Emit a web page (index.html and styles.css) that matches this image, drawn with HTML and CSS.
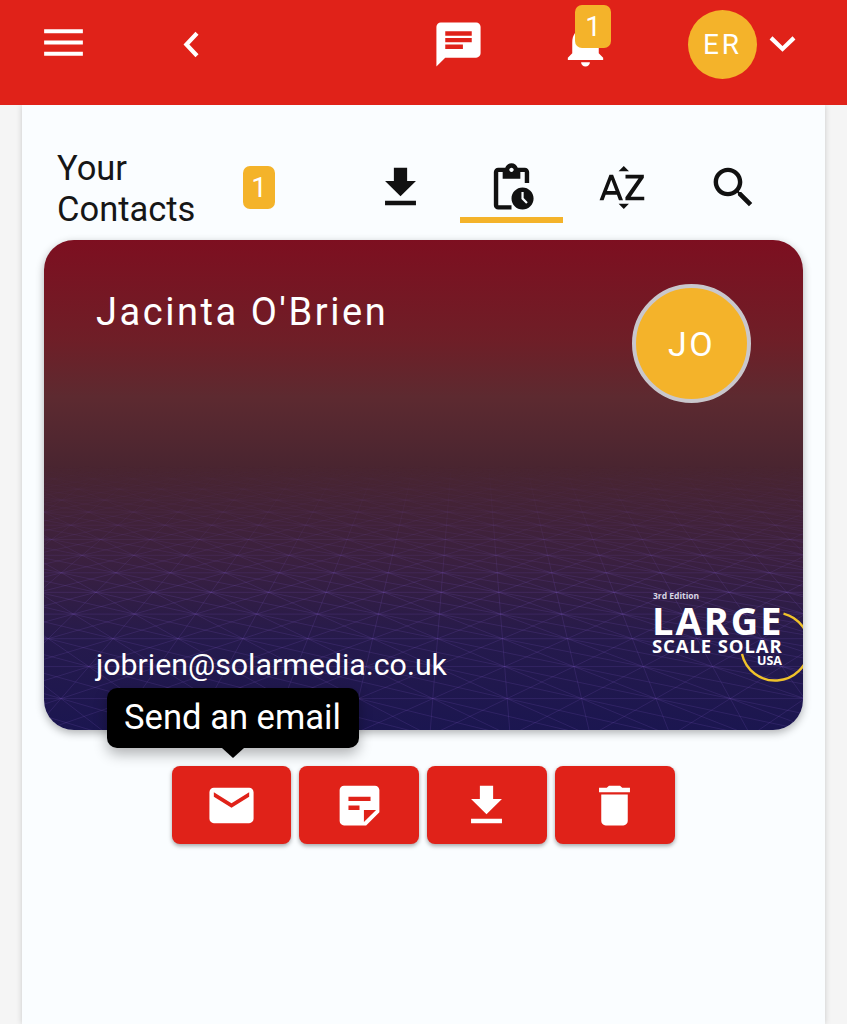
FILE: index.html
```html
<!DOCTYPE html>
<html lang="en">

<head>
    <meta charset="UTF-8">
    <meta name="viewport" content="width=device-width, initial-scale=1.0">
    <title>Your Contacts</title>
    <link rel="stylesheet" href="styles.css">
</head>

<body>
    <header class="topbar">
        <svg class="icon menu-icon" viewBox="0 0 52 52"><path d="M7 11h38v4H7zM7 22h38v4H7zM7 33h38v4H7z" /></svg>
        <svg class="icon back-icon" viewBox="0 0 24 24"><path d="M15.4 6.9 10.6 12l4.8 5.1" fill="none" stroke="#fff" stroke-width="1.9" /></svg>
        <svg class="icon chat-icon" viewBox="0 0 24 24"><path d="M20 2H4c-1.1 0-2 .9-2 2v18l4-4h14c1.1 0 2-.9 2-2V4c0-1.1-.9-2-2-2zM6 9h12v2H6V9zm8 5H6v-2h8v2zm4-6H6V6h12v2z" /></svg>
        <div class="bell">
            <svg class="icon" viewBox="0 0 24 24"><path d="M12 22c1.1 0 2-.9 2-2h-4c0 1.1.9 2 2 2zm6-6v-5c0-3.07-1.63-5.64-4.5-6.32V4c0-.83-.67-1.5-1.5-1.5s-1.5.67-1.5 1.5v.68C7.64 5.36 6 7.92 6 11v5l-2 2v1h16v-1l-2-2z" /></svg>
            <span class="badge bell-badge">1</span>
        </div>
        <div class="avatar">ER</div>
        <svg class="icon caret-icon" viewBox="0 0 24 24"><path d="M6.8 9 12 14l5.2-5" fill="none" stroke="#fff" stroke-width="1.9" /></svg>
    </header>

    <main class="panel">
        <div class="title-row">
            <h2 class="title">Your Contacts</h2>
            <span class="badge title-badge">1</span>
            <div class="tabs">
                <div class="tab">
                    <svg class="icon dark" viewBox="0 0 24 24"><path d="M19 9h-4V3H9v6H5l7 7 7-7zM5 18v2h14v-2H5z" /></svg>
                </div>
                <div class="tab tab-on">
                    <svg class="icon dark" viewBox="0 0 24 24"><path d="M17 12c-2.76 0-5 2.24-5 5s2.24 5 5 5 5-2.24 5-5-2.24-5-5-5zm1.65 7.35L16.5 17.2V14h1v2.79l1.85 1.85-.7.71zM18 3h-3.18C14.4 1.84 13.3 1 12 1s-2.4.84-2.82 2H6c-1.1 0-2 .9-2 2v15c0 1.1.9 2 2 2h6v-2H6V5h2v3h8V5h2v5h2V5c0-1.1-.9-2-2-2zm-6 2c-.55 0-1-.45-1-1s.45-1 1-1 1 .45 1 1-.45 1-1 1z" /></svg>
                </div>
                <div class="tab">
                    <svg class="icon dark" viewBox="0 0 24 24"><path d="M14.94 4.66h-4.72l2.36-2.36zm-4.69 14.71h4.66l-2.33 2.33zM6.1 6.27L1.6 17.73h1.84l.92-2.45h5.11l.92 2.45h1.84L7.74 6.27H6.1zm-1.13 7.37l1.94-5.18 1.94 5.18H4.97zm10.76 2.5h6.12v1.59h-8.53v-1.29l5.92-8.56h-5.88v-1.6h8.3v1.26l-5.93 8.6z" /></svg>
                </div>
                <div class="tab">
                    <svg class="icon dark" viewBox="0 0 24 24"><path d="M15.5 14h-.79l-.28-.27C15.41 12.59 16 11.11 16 9.5 16 5.91 13.09 3 9.5 3S3 5.91 3 9.5 5.91 16 9.5 16c1.61 0 3.09-.59 4.23-1.57l.27.28v.79l5 4.99L20.49 19l-4.99-5zm-6 0C7.01 14 5 11.99 5 9.5S7.01 5 9.5 5 14 7.01 14 9.5 11.99 14 9.5 14z" /></svg>
                </div>
            </div>
        </div>

        <section class="card">
            <svg id="cardGrid" class="card-grid" viewBox="0 0 759 490"></svg>
            <div class="card-top">
                <div class="card-name">Jacinta O'Brien</div>
                <div class="card-avatar">JO</div>
            </div>
            <div class="card-email">jobrien@solarmedia.co.uk</div>
            <div class="logo">
                <svg class="logo-arc" viewBox="0 0 151 100"><path d="M131.5 21.6A34 34 0 1 1 90 62" /></svg>
                <div class="logo-edition">3rd Edition</div>
                <div class="logo-large">LARGE</div>
                <div class="logo-scale">SCALE SOLAR</div>
                <div class="logo-usa">USA</div>
            </div>
        </section>

        <div class="actions">
            <button class="action">
                <svg class="icon" viewBox="0 0 24 24"><path d="M20 4H4c-1.1 0-1.99.9-1.99 2L2 18c0 1.1.9 2 2 2h16c1.1 0 2-.9 2-2V6c0-1.1-.9-2-2-2zm0 4l-8 5-8-5V6l8 5 8-5v2z" /></svg>
                <span class="tooltip">Send an email</span>
            </button>
            <button class="action">
                <svg class="icon" viewBox="0 0 24 24"><path d="M19 3H4.99C3.89 3 3 3.9 3 5l.01 14c0 1.1.89 2 1.99 2h10l6-6V5c0-1.1-.9-2-2-2zM7 8h10v2H7V8zm5 6H7v-2h5v2zm2 5.5V14h5.5L14 19.5z" /></svg>
            </button>
            <button class="action">
                <svg class="icon" viewBox="0 0 24 24"><path d="M19 9h-4V3H9v6H5l7 7 7-7zM5 18v2h14v-2H5z" /></svg>
            </button>
            <button class="action">
                <svg class="icon" viewBox="0 0 24 24"><path d="M6 19c0 1.1.9 2 2 2h8c1.1 0 2-.9 2-2V7H6v12zM19 4h-3.5l-1-1h-5l-1 1H5v2h14V4z" /></svg>
            </button>
        </div>
    </main>

    <script src="grid.js"></script>
</body>

</html>
```
FILE: styles.css
```css
* {
    box-sizing: border-box;
}

body {
    margin: 0;
    background-color: #f5f5f5;
    font-family: Roboto, "Liberation Sans", sans-serif;
}

.icon {
    display: block;
    flex: none;
    width: 53px;
    height: 53px;
    fill: #ffffff;
}

.icon.dark {
    fill: #111111;
}

/* top bar */
.topbar {
    display: flex;
    align-items: center;
    height: 105px;
    padding: 0 0 16px 37px;
    background-color: #e02219;
    position: relative;
    z-index: 2;
}

.back-icon {
    margin-left: 73px;
}

.chat-icon {
    margin-left: 216px;
}

.caret-icon {
    margin-left: -1px;
}

.bell {
    position: relative;
    margin-left: 74px;
}

.badge {
    display: flex;
    align-items: center;
    justify-content: center;
    background-color: #f4b32a;
    border-radius: 7px;
    color: #ffffff;
    font-size: 28px;
}

.bell-badge {
    position: absolute;
    top: -13px;
    left: 16px;
    width: 36px;
    height: 43px;
}

.avatar {
    display: flex;
    align-items: center;
    justify-content: center;
    flex: none;
    width: 69px;
    height: 69px;
    margin-left: 76px;
    border-radius: 50%;
    background-color: #f4b32a;
    color: #ffffff;
    font-size: 28px;
    letter-spacing: 3px;
}

/* white panel */
.panel {
    width: 803px;
    min-height: calc(100vh - 105px);
    margin-left: 22px;
    padding: 42px 22px 0;
    background-color: #fafdff;
    box-shadow: 0 0 6px rgba(0, 0, 0, 0.18);
}

.title-row {
    display: flex;
    align-items: flex-start;
    height: 82px;
    padding-left: 13px;
}

.title {
    width: 186px;
    margin: 1px 0 0;
    color: #161616;
    font-size: 34.5px;
    font-weight: 400;
    line-height: 41px;
}

.title-badge {
    width: 32px;
    height: 43px;
    margin-top: 19px;
    flex: none;
}

.tabs {
    display: flex;
    margin-left: 70px;
    margin-top: 14px;
}

.tab {
    display: flex;
    justify-content: center;
    width: 103px;
    height: 62px;
    margin: 0 4px;
}

.tab-on {
    border-bottom: 6px solid #f4b32a;
}

/* contact card */
.card {
    position: relative;
    display: flex;
    flex-direction: column;
    justify-content: space-between;
    height: 490px;
    margin-top: 11px;
    padding: 44px 52px 48px;
    overflow: hidden;
    border-radius: 30px;
    color: #ffffff;
    background: linear-gradient(180deg, #7d0f20 0%, #6f1e27 20%, #5d2a30 32%, #4a2530 46%, #3a2040 66%, #251a4c 82%, #1b1650 100%);
    box-shadow: 0 3px 8px rgba(0, 0, 0, 0.3);
}

.card-grid {
    position: absolute;
    top: 0;
    left: 0;
    width: 759px;
    height: 490px;
    filter: blur(0.5px);
    -webkit-mask-image: linear-gradient(180deg, transparent 46%, #000 72%);
    mask-image: linear-gradient(180deg, transparent 46%, #000 72%);
}

.card-grid line {
    stroke: #7a55b8;
    stroke-opacity: 0.2;
    stroke-width: 1;
}

.card-top {
    position: relative;
    display: flex;
    justify-content: space-between;
}

.card-name {
    font-size: 38px;
    letter-spacing: 2.55px;
    line-height: 56px;
}

.card-avatar {
    display: flex;
    align-items: center;
    justify-content: center;
    width: 119px;
    height: 119px;
    border: 4px solid #c9c7cc;
    border-radius: 50%;
    background-color: #f4b32a;
    font-size: 34px;
    letter-spacing: 2.5px;
}

.card-email {
    position: relative;
    font-size: 30.3px;
    line-height: 34px;
}

/* event logo, sits over the card corner */
.logo {
    position: absolute;
    top: 353px;
    left: 608px;
    width: 151px;
    height: 100px;
    font-family: "Open Sans", sans-serif;
    font-weight: 700;
}

.logo-arc {
    position: absolute;
    top: -1px;
    left: 0;
    width: 151px;
    height: 100px;
    fill: none;
    stroke: #f0c22a;
    stroke-width: 2.4;
}

.logo-edition {
    position: relative;
    margin-left: 1px;
    font-size: 8.5px;
    line-height: 0.8;
    color: #d8d6e4;
}

.logo-large {
    position: relative;
    margin-top: 5px;
    font-size: 38px;
    line-height: 0.8;
    letter-spacing: 2px;
}

.logo-scale {
    position: relative;
    margin-top: 3.4px;
    font-size: 18.5px;
    line-height: 0.8;
    letter-spacing: 0.9px;
    white-space: nowrap;
}

.logo-usa {
    position: relative;
    width: 130px;
    margin-top: 2.4px;
    font-size: 12.5px;
    line-height: 0.8;
    text-align: right;
}

/* actions */
.actions {
    display: flex;
    justify-content: center;
    gap: 8px;
    margin-top: 36px;
    padding-right: 1px;
}

.action {
    position: relative;
    display: flex;
    align-items: center;
    justify-content: center;
    width: 119.75px;
    height: 78px;
    padding: 0;
    border: none;
    border-radius: 8px;
    background-color: #e02219;
    box-shadow: 0 2px 4px rgba(0, 0, 0, 0.35);
}

.tooltip {
    position: absolute;
    top: -78px;
    left: -65px;
    width: 252px;
    height: 60px;
    border-radius: 10px;
    background-color: #000000;
    color: #ffffff;
    font-family: Roboto, sans-serif;
    font-size: 34.6px;
    line-height: 58px;
    text-align: center;
    box-shadow: 0 6px 14px rgba(0, 0, 0, 0.3);
}

.tooltip::after {
    content: "";
    position: absolute;
    top: 60px;
    left: 115px;
    border-top: 10px solid #000000;
    border-left: 11px solid transparent;
    border-right: 11px solid transparent;
}
```
FILE: grid.js
```js
// draws the perspective triangle grid on the card background
const grid = document.getElementById('cardGrid');
const svgNS = 'http://www.w3.org/2000/svg';

// measured from the artwork, in card pixels
const horizonY = -12;
const centerX = 426;
const spread = 0.158;
const rowStep = 0.000155;
const firstRow = 0.00259;

function project(col, row) {
    const d = firstRow + rowStep * row;
    return [centerX + col * spread / d, horizonY + 1 / d];
}

function addLine(a, b) {
    const line = document.createElementNS(svgNS, 'line');
    line.setAttribute('x1', a[0].toFixed(1));
    line.setAttribute('y1', a[1].toFixed(1));
    line.setAttribute('x2', b[0].toFixed(1));
    line.setAttribute('y2', b[1].toFixed(1));
    grid.appendChild(line);
}

const rowFrom = -6;
const rowTo = 12;

for (let r = rowFrom; r <= rowTo; r++) {
    addLine([0, horizonY + 1 / (firstRow + rowStep * r)], [759, horizonY + 1 / (firstRow + rowStep * r)]);
}

[0, -1, 1, -2].forEach(slope => {
    for (let n = -60; n <= 60; n++) {
        const col = n + 0.5;
        addLine(project(col + slope * rowFrom, rowFrom), project(col + slope * rowTo, rowTo));
    }
});
```
